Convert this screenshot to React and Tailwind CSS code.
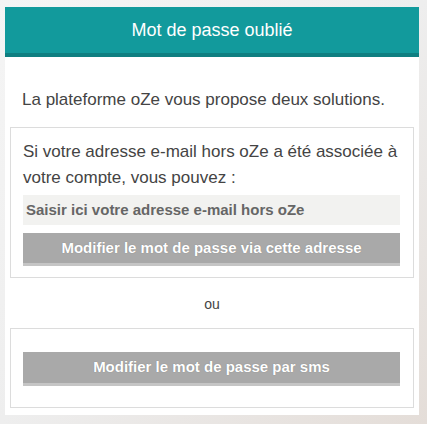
export default function App() {
  const font = { fontFamily: '"Liberation Sans", Arial, sans-serif' };
  return (
    <div style={font} className="w-[427px] h-[424px] overflow-hidden bg-gradient-to-br from-[#f5f5f5] via-[#eeeeee] to-[#e4ddd8] pt-[7px]">
      {/* Panel */}
      <div className="ml-[5px] w-[414px] bg-white pb-[7px]">
        <div className="h-[50px] bg-[#129a9c] border-b-[4px] border-[#0f7f81] flex items-center justify-center">
          <h1 className="text-white text-[18px]">Mot de passe oublié</h1>
        </div>

        <p className="text-[#444] text-[17px] leading-[20px] pl-[17px] pt-[33px] pb-[17px]">
          La plateforme oZe vous propose deux solutions.
        </p>

        {/* Email option */}
        <div className="mx-[5px] border border-[#dcdcdc] pt-[11px] pb-[11px] pl-[12px] pr-[13px]">
          <p className="text-[#444] text-[17px] leading-[26px]">
            Si votre adresse e-mail hors oZe a été associée à votre compte, vous pouvez :
          </p>
          <div className="mt-[4px] h-[30px] bg-[#f2f2f0] flex items-center pl-[3px] text-[15px] font-bold text-[#666]">
            Saisir ici votre adresse e-mail hors oZe
          </div>
          <button className="mt-[8px] w-full h-[33px] bg-[#a9a9a9] border-b-[3px] border-[#c5c5c5] text-white text-[15px] font-bold [text-shadow:0_0_1px_rgba(0,0,0,0.3)]">
            Modifier le mot de passe via cette adresse
          </button>
        </div>

        <p className="text-center text-[#444] text-[14px] leading-[20px] mt-[16px] mb-[14px]">ou</p>

        {/* SMS option */}
        <div className="mx-[5px] border border-[#dcdcdc] pt-[23px] pb-[21px] pl-[12px] pr-[13px]">
          <button className="w-full h-[34px] bg-[#a9a9a9] border-b-[3px] border-[#c5c5c5] text-white text-[15px] font-bold [text-shadow:0_0_1px_rgba(0,0,0,0.3)]">
            Modifier le mot de passe par sms
          </button>
        </div>
      </div>
    </div>
  );
}
